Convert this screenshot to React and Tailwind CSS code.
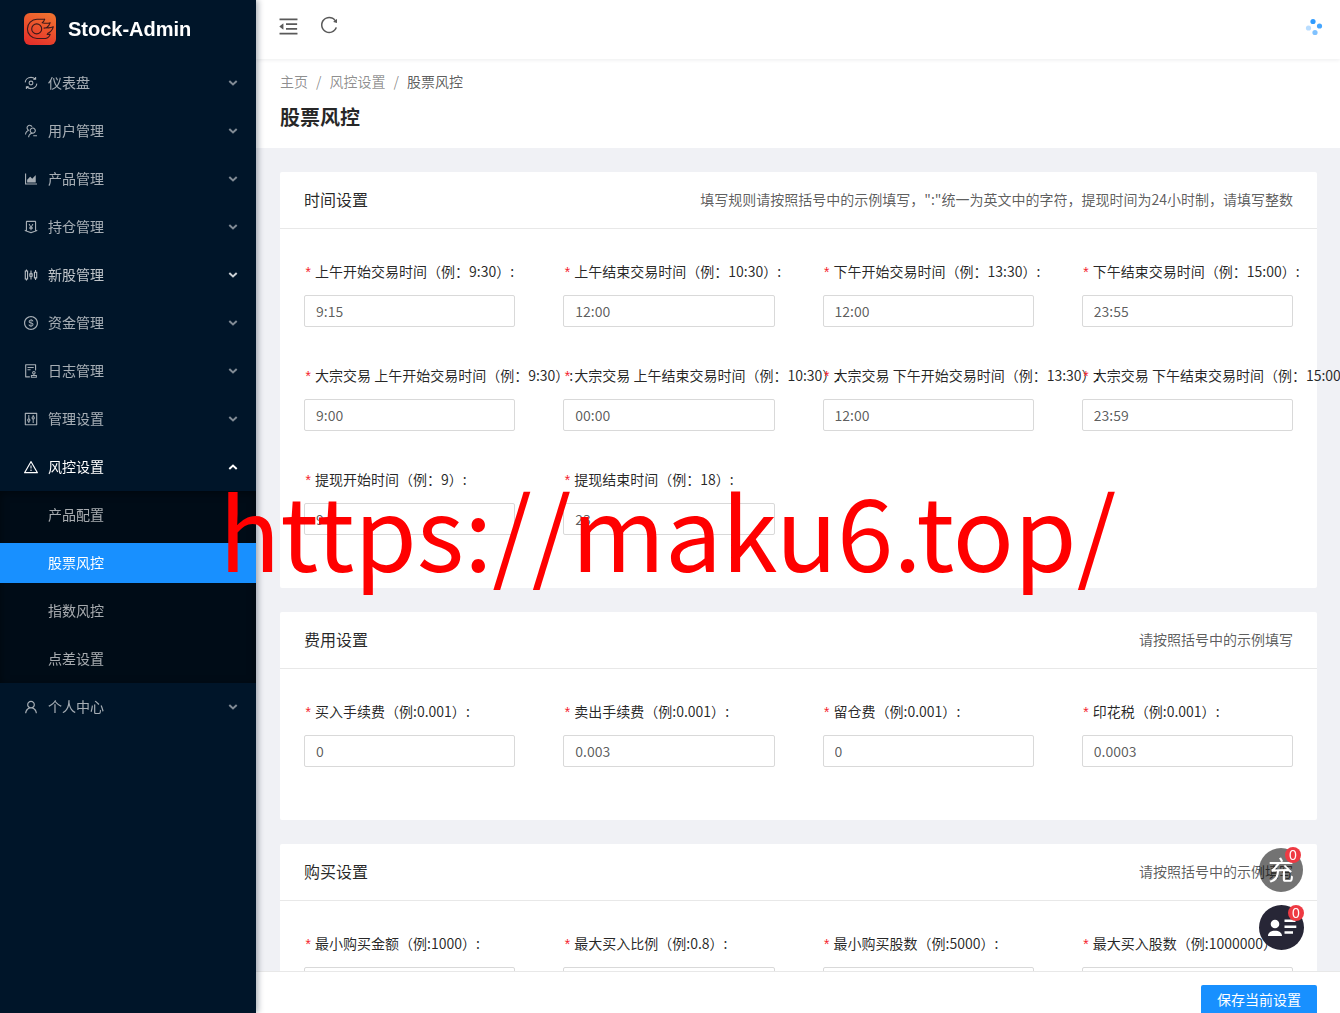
import {
  AiOutlineUsergroupDelete,
  AiOutlineAreaChart,
  AiOutlineMoneyCollect,
  AiOutlineSliders,
  AiOutlineDollarCircle,
  AiOutlineAudit,
  AiOutlineControl,
  AiOutlineWarning,
  AiOutlineUser,
  AiOutlineMenuFold,
  AiOutlineReload,
} from "react-icons/ai";

function LogoIcon() {
  return (
    <svg viewBox="0 0 32 32" className="size-8" aria-hidden="true">
      <defs>
        <linearGradient id="logo-bg" x1="0.7" y1="0" x2="0.3" y2="1">
          <stop offset="0" stopColor="#f0702f" />
          <stop offset="1" stopColor="#e5302a" />
        </linearGradient>
      </defs>
      <rect width="32" height="32" rx="6" fill="url(#logo-bg)" />
      <g fill="none" stroke="#3a1a1c" strokeWidth="1.1" strokeLinejoin="round" strokeLinecap="round">
        <circle cx="12.700" cy="15.900" r="5" />
        <path d="M20.600 6.300h-7.600a9.600 9.600 0 0 0 0 19.200h8.600c2.200-.3 3.800-1.800 4.600-4.100h-3" />
        <path d="M20.600 6.300c-.4 1.500-1.200 2.600-2.400 3.400 2.800.8 5.300.8 8 0-.6 2.100-1.800 3.800-3.600 5 2.600.4 4.600.1 6.700-.9-.8 3-2.800 5.200-5.700 6.600" />
        <path d="M22.600 14.700l-2.600.4" />
      </g>
    </svg>
  );
}

function DashboardIcon({ className }) {
  return (
    <svg viewBox="0 0 16 16" className={className} fill="none" stroke="currentColor" strokeWidth="1.1" aria-hidden="true">
      <circle cx="8" cy="8" r="1.900" />
      <path d="M2.200 7.400C2.400 4.600 4.700 2.400 8 2.400c1.700 0 3 .5 4.200 1.600M13.800 8.600c-.2 2.800-2.500 5-5.800 5-1.700 0-3-.5-4.200-1.600" />
      <path d="M12.600 1.900v2.300h-2.400M3.400 14.100v-2.300h2.400" />
    </svg>
  );
}

function Caret({ up, bright }) {
  return (
    <svg
      viewBox="0 0 10 6"
      className={`h-1.5 w-2.5 ${up ? "rotate-180 text-white" : bright ? "text-white/80" : "text-white/50"}`}
      fill="none"
      stroke="currentColor"
      strokeWidth="2"
      aria-hidden="true"
    >
      <path d="M1.300 1 5 4.400 8.700 1" />
    </svg>
  );
}

const MENU = [
  { label: "仪表盘", Icon: DashboardIcon },
  { label: "用户管理", Icon: AiOutlineUsergroupDelete },
  { label: "产品管理", Icon: AiOutlineAreaChart },
  { label: "持仓管理", Icon: AiOutlineMoneyCollect },
  { label: "新股管理", Icon: AiOutlineSliders, bright: true },
  { label: "资金管理", Icon: AiOutlineDollarCircle },
  { label: "日志管理", Icon: AiOutlineAudit },
  { label: "管理设置", Icon: AiOutlineControl },
  {
    label: "风控设置",
    Icon: AiOutlineWarning,
    children: ["产品配置", "股票风控", "指数风控", "点差设置"],
  },
  { label: "个人中心", Icon: AiOutlineUser },
];

const SELECTED = "股票风控";

const CARDS = [
  {
    id: "time",
    title: "时间设置",
    hint: '填写规则请按照括号中的示例填写，":"统一为英文中的字符，提现时间为24小时制，请填写整数',
    fields: [
      ["上午开始交易时间（例：9:30）", "9:15"],
      ["上午结束交易时间（例：10:30）", "12:00"],
      ["下午开始交易时间（例：13:30）", "12:00"],
      ["下午结束交易时间（例：15:00）", "23:55"],
      ["大宗交易 上午开始交易时间（例：9:30）", "9:00"],
      ["大宗交易 上午结束交易时间（例：10:30）", "00:00"],
      ["大宗交易 下午开始交易时间（例：13:30）", "12:00"],
      ["大宗交易 下午结束交易时间（例：15:00）", "23:59"],
      ["提现开始时间（例：9）", "9"],
      ["提现结束时间（例：18）", "23"],
    ],
  },
  {
    id: "fee",
    title: "费用设置",
    hint: "请按照括号中的示例填写",
    fields: [
      ["买入手续费（例:0.001）", "0"],
      ["卖出手续费（例:0.001）", "0.003"],
      ["留仓费（例:0.001）", "0"],
      ["印花税（例:0.001）", "0.0003"],
    ],
  },
  {
    id: "buy",
    title: "购买设置",
    hint: "请按照括号中的示例填写",
    fields: [
      ["最小购买金额（例:1000）", ""],
      ["最大买入比例（例:0.8）", ""],
      ["最小购买股数（例:5000）", ""],
      ["最大买入股数（例:1000000）", ""],
    ],
  },
];

function MenuItem({ item }) {
  const { label, Icon, bright, children } = item;
  const open = Boolean(children);
  return (
    <li>
      <button
        type="button"
        aria-expanded={open}
        className={`flex h-12 w-full items-center pr-[18px] pl-[23px] ${open ? "text-white" : bright ? "text-white/75" : "text-white/65"}`}
      >
        <Icon className="size-4" />
        <span className="ml-[9px] flex-1 pb-0.5 text-left">{label}</span>
        <Caret up={open} bright={bright} />
      </button>
      {children && (
        <ul className="bg-[#000c17] shadow-[inset_0_2px_8px_rgba(0,0,0,0.45)]">
          {children.map((child) => (
            <li key={child} className="py-1">
              <a
                href="#"
                className={`flex h-10 items-center pb-0.5 pl-12 ${child === SELECTED ? "bg-[#1890ff] text-white" : "text-white/65"}`}
              >
                {child}
              </a>
            </li>
          ))}
        </ul>
      )}
    </li>
  );
}

function Sidebar() {
  return (
    <aside className="z-20 w-64 shrink-0 bg-[#001529] shadow-[2px_0_6px_rgba(0,21,41,0.35)]">
      <a href="#" className="flex h-[59px] items-center gap-3 pb-0.5 pl-6">
        <LogoIcon />
        <span className="font-['Liberation_Sans',sans-serif] text-xl font-bold text-white">Stock-Admin</span>
      </a>
      <nav>
        <ul>
          {MENU.map((item) => (
            <MenuItem key={item.label} item={item} />
          ))}
        </ul>
      </nav>
    </aside>
  );
}

function Spinner() {
  return (
    <svg viewBox="0 0 20 20" className="size-5" fill="#1890ff" role="img" aria-label="加载中">
      <circle cx="9" cy="4.500" r="2.600" fillOpacity="0.9" />
      <circle cx="15.500" cy="9" r="2.600" fillOpacity="0.8" />
      <circle cx="11" cy="15.500" r="2.600" fillOpacity="0.55" />
      <circle cx="4.500" cy="11" r="2.600" fillOpacity="0.3" />
    </svg>
  );
}

function Field({ id, label, value }) {
  return (
    <div className="mb-[30px] min-w-0">
      <label htmlFor={id} className="flex h-9 items-center whitespace-nowrap text-black/85">
        <span className="mr-1 w-[7px] pt-1.5 font-['Liberation_Mono',monospace] text-[#f5222d]">*</span>
        {label}
        <span>:</span>
      </label>
      <input
        id={id}
        type="text"
        defaultValue={value}
        className="mt-1.5 block h-8 w-full rounded-xs border border-[#d9d9d9] bg-white px-[11px] text-black/65 outline-none"
      />
    </div>
  );
}

function Card({ card }) {
  return (
    <section className="rounded-xs bg-white">
      <header className="flex h-[57px] items-center justify-between border-b border-[#e8e8e8] px-6 pb-0.5">
        <h2 className="text-base text-black/85">{card.title}</h2>
        <p>{card.hint}</p>
      </header>
      <div className="grid grid-cols-4 gap-x-12 px-6 pt-6 pb-[23px]">
        {card.fields.map(([label, value], i) => (
          <Field key={label} id={`${card.id}-${i}`} label={label} value={value} />
        ))}
      </div>
    </section>
  );
}

function FloatingButtons() {
  return (
    <div className="fixed right-9 bottom-[63px] z-30 flex flex-col items-start gap-[13px]">
      <button
        type="button"
        aria-label="充值"
        className="relative flex size-11 items-center justify-center rounded-full bg-black/55 pb-0.5 text-[26px] text-white"
      >
        充
        <span className="absolute -top-px right-0.5 flex size-4 items-center justify-center rounded-full bg-[#ee3a43] font-['Liberation_Sans',sans-serif] text-sm">
          0
        </span>
      </button>
      <button
        type="button"
        aria-label="实名认证"
        className="relative flex size-[45px] items-center justify-center rounded-full bg-[#272636] text-white"
      >
        <svg viewBox="0 0 30 20" className="h-5 w-[30px]" fill="currentColor" aria-hidden="true">
          <circle cx="8" cy="6" r="4.300" />
          <path d="M1 18c0-3.400 3-5.300 7-5.300s7 1.900 7 5.300zM17.500 1.500h11v2.600h-11zM17.500 7.400h11.800v2.600H17.500zM17.500 13.200h8.500v2.600h-8.500z" />
        </svg>
        <span className="absolute top-0 right-0 flex size-4 items-center justify-center rounded-full bg-[#ee3a43] font-['Liberation_Sans',sans-serif] text-sm">
          0
        </span>
      </button>
    </div>
  );
}

export default function App() {
  return (
    <div className="flex h-screen overflow-hidden bg-[#f0f2f5] font-['Noto_Sans_CJK_SC',sans-serif] text-sm text-black/65">
      <Sidebar />
      <div className="flex min-w-0 flex-1 flex-col">
        <header className="z-10 flex h-[59px] shrink-0 items-center justify-between bg-white pr-4 pl-[21px] shadow-[0_1px_4px_rgba(0,21,41,0.08)]">
          <div className="flex items-center gap-[19px] pb-2">
            <button type="button" aria-label="收起菜单" className="pt-0.5">
              <AiOutlineMenuFold className="size-[23px]" />
            </button>
            <button type="button" aria-label="刷新" className="pb-0.5">
              <AiOutlineReload className="size-5" />
            </button>
          </div>
          <div className="pb-1.5">
            <Spinner />
          </div>
        </header>

        <main className="min-h-0 flex-1 overflow-x-hidden overflow-y-auto bg-[#f0f1f5] [scrollbar-width:none]">
          <div className="h-[89px] bg-white px-6 pt-[11px]">
            <nav aria-label="面包屑" className="flex h-[22px] items-center gap-2 text-black/45">
              <a href="#">主页</a>
              <span>/</span>
              <a href="#">风控设置</a>
              <span>/</span>
              <span className="text-black/65">股票风控</span>
            </nav>
            <h1 className="mt-[9px] text-xl leading-8 font-bold text-black/85">股票风控</h1>
          </div>
          <div className="flex flex-col gap-6 py-6 pr-[23px] pl-6">
            {CARDS.map((card) => (
              <Card key={card.id} card={card} />
            ))}
          </div>
        </main>

        <footer className="flex h-[42px] shrink-0 items-start justify-end overflow-hidden border-t border-[#e8e8e8] bg-white pt-[13px] pr-[23px]">
          <button type="button" className="h-8 shrink-0 rounded-xs bg-[#1890ff] px-4 pb-1 text-white">
            保存当前设置
          </button>
        </footer>
      </div>

      <FloatingButtons />
      <div className="pointer-events-none fixed top-[453px] left-[219px] z-40 text-[101px] leading-[150px] whitespace-nowrap text-[#ff0000]">
        https://maku6.top/
      </div>
    </div>
  );
}
